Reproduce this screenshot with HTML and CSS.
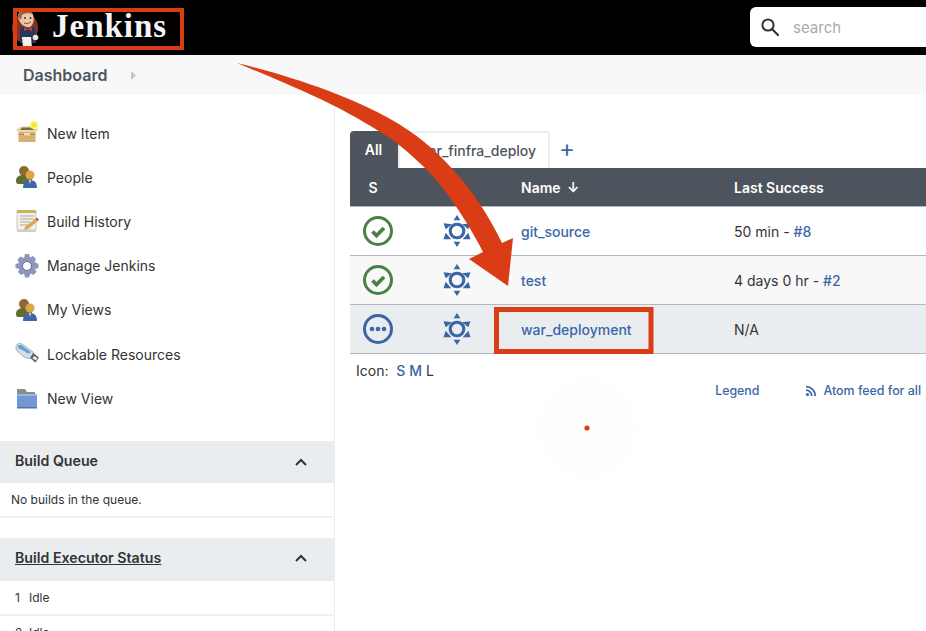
FILE: index.html
```html
<!DOCTYPE html>
<html lang="en">
<head>
<meta charset="utf-8">
<title>Dashboard [Jenkins]</title>
<link rel="stylesheet" href="styles.css">
</head>
<body>
<header class="topbar">
  <a class="logo">
    <svg class="butler" viewBox="0 0 30 42" width="30" height="42">
      <ellipse cx="13" cy="21" rx="13" ry="15" fill="#8e3020"/>
      <path d="M8 20h15l1 16H8z" fill="#26385f"/>
      <path d="M10 30h9l1 11H11z" fill="#f4f1ea"/>
      <circle cx="23.500" cy="30.500" r="2.800" fill="#f2e6d8"/>
      <path d="M12 20l4 2 4-2v4l-4-1.500-4 1.500z" fill="#d33833"/>
      <path d="M6 9c0-4 4-6 8-6s7 3 7.500 7c.5 3 0 5-1 7-1 3-4 4-6 3-3-1-6-3-7-6-1-2-1.500-3-1.500-5z" fill="#eec8a6"/>
      <path d="M6 10c0-5 4-8 8-8 3 0 6 2 7 5-4-1-8-1-11 1l-1 5z" fill="#8f6a48"/>
      <circle cx="13" cy="11" r=".9" fill="#222"/><circle cx="18.500" cy="11" r=".9" fill="#222"/>
      <path d="M12 16q3 2 7-1" stroke="#8a3a2a" stroke-width=".9" fill="none"/>
    </svg>
    <span class="logo-text">Jenkins</span>
  </a>
  <div class="search">
    <svg viewBox="0 0 20 20" width="20" height="20"><circle cx="8" cy="8" r="5.6" fill="none" stroke="#333" stroke-width="2"/><path d="M12.2 12.2L18 18" stroke="#333" stroke-width="2.2" stroke-linecap="round"/></svg>
    <span class="search-text">search</span>
  </div>
</header>

<nav class="crumbs">
  <span class="crumb">Dashboard</span>
  <svg class="crumb-arrow" viewBox="0 0 5 9" width="5" height="9"><path d="M0 0l5 4.500-5 4.500z" fill="#c4c7ca"/></svg>
</nav>

<div class="layout">
  <aside class="side">
    <ul class="tasks">
      <li class="task">
        <svg viewBox="0 0 24 24" width="24" height="24"><path d="M3.500 9h17v12h-17z" fill="#d9ae72"/><path d="M.500 8.500l6-3h11l6 3-3 2.500H3.500z" fill="#efd7ae"/><path d="M7 6.500h10l2 2.500H5z" fill="#7c6a4c"/><path d="M3.500 13h17v1h-17z" fill="#b98d52"/><path d="M9 12h6v2.500H9z" fill="#f0dcb8"/><circle cx="19" cy="4" r="4" fill="#fdf36b"/><circle cx="19" cy="4" r="2" fill="#f7e21c"/></svg>
        <span>New Item</span>
      </li>
      <li class="task">
        <svg viewBox="0 0 24 24" width="24" height="24"><circle cx="9" cy="6" r="5" fill="#8c6a32"/><path d="M1 16c0-5 4-6 8-6s8 1 8 6v3H3c-1 0-2-1-2-3z" fill="#5f6d2d"/><circle cx="15" cy="10" r="4.600" fill="#dca54a"/><path d="M8 23c0-6 3-8 7-8s7 2 7 8z" fill="#3f67a8"/><path d="M14 15h2l-1 4z" fill="#f3ead8"/></svg>
        <span>People</span>
      </li>
      <li class="task">
        <svg viewBox="0 0 24 24" width="24" height="24"><path d="M2 2h19v19H2z" fill="#f3f1e8" stroke="#bdbdb5" stroke-width=".8"/><path d="M2 1h19v3H2z" fill="#c9b25d"/><path d="M5 7h14M5 10h14M5 13h10M5 16h8" stroke="#a7a9a6" stroke-width="1"/><path d="M2 21h19v2H2z" fill="#cfcfca"/><path d="M10 18l10-8 3 2-10 8-4 1z" fill="#e0a548"/><path d="M20 10l2-1.500 2 2.500-1 1z" fill="#c6473a"/></svg>
        <span>Build History</span>
      </li>
      <li class="task">
        <svg viewBox="0 0 24 24" width="24" height="24"><path d="M10 0h4l1 3.500 3-1.500 3 3-1.500 3L23.500 10v4L20 15l1.500 3-3 3-3-1.500-1.500 4h-4l-1-4L6 21l-3-3 1.500-3L.500 14v-4L4 9 2.500 5.500l3-3L9 4z" fill="#8f96bd"/><circle cx="12" cy="12" r="4.500" fill="#fff"/><circle cx="12" cy="12" r="4.500" fill="none" stroke="#676d94"/></svg>
        <span>Manage Jenkins</span>
      </li>
      <li class="task">
        <svg viewBox="0 0 24 24" width="24" height="24"><circle cx="9" cy="6" r="5" fill="#8c6a32"/><path d="M1 16c0-5 4-6 8-6s8 1 8 6v3H3c-1 0-2-1-2-3z" fill="#5f6d2d"/><circle cx="15" cy="10" r="4.600" fill="#dca54a"/><path d="M8 23c0-6 3-8 7-8s7 2 7 8z" fill="#3f67a8"/><path d="M14 15h2l-1 4z" fill="#f3ead8"/></svg>
        <span>My Views</span>
      </li>
      <li class="task">
        <svg viewBox="0 0 24 24" width="24" height="24"><path d="M1 4c1-3 4-3 6-2l11 8c2 2 1 5-2 6-3 1-5 0-7-1L2 9C1 8 1 6 1 4z" fill="#d8dde2" stroke="#8d9399" stroke-width=".7"/><path d="M3 3.500c1-1 3-1 4 0l8 6c1 1 0 2-1 2-2 0-3-1-4-2L3 6z" fill="#5ea3e4"/><path d="M15 16l3-5 6 4.500-3.500 5z" fill="#5c6064"/><path d="M19 14l3.500 2-1.500 2.500-3.500-2z" fill="#e6e6e6"/></svg>
        <span>Lockable Resources</span>
      </li>
      <li class="task">
        <svg viewBox="0 0 24 24" width="24" height="24"><path d="M2 3h8l2 3h8v4H2z" fill="#8b8e90"/><path d="M2 8h20v14H2z" fill="#7198d2"/><path d="M2 8h20v2H2z" fill="#97b7e2"/><path d="M2 21h20v1.500H2z" fill="#4f74ab"/></svg>
        <span>New View</span>
      </li>
    </ul>

    <section class="pane">
      <h2 class="pane-head"><span>Build Queue</span><svg class="chev-queue" viewBox="0 0 12 8" width="12" height="8"><path d="M1 7l5-5 5 5" fill="none" stroke="#333" stroke-width="2"/></svg></h2>
      <div class="pane-row pane-row-queue">No builds in the queue.</div>
    </section>

    <section class="pane">
      <h2 class="pane-head pane-head-exec"><a>Build Executor Status</a><svg viewBox="0 0 12 8" width="12" height="8"><path d="M1 7l5-5 5 5" fill="none" stroke="#333" stroke-width="2"/></svg></h2>
      <div class="pane-row pane-row-exec"><span class="num">1</span>Idle</div>
      <div class="pane-row pane-row-exec"><span class="num">2</span>Idle</div>
    </section>
  </aside>

  <main class="main">
    <div class="tabs">
      <span class="tab tab-active">All</span>
      <span class="tab tab-plain">war_finfra_deploy</span>
      <span class="tab-add">+</span>
    </div>
    <table class="jobs">
      <colgroup><col class="c-s"><col class="c-w"><col class="c-n"><col></colgroup>
      <thead>
        <tr><th class="ctr th-s">S</th><th class="ctr">W</th><th>Name <span class="sort">↓</span></th><th>Last Success</th></tr>
      </thead>
      <tbody>
        <tr>
          <td class="ctr"><svg class="ball" viewBox="0 0 32 32" width="32" height="32"><circle cx="16" cy="16" r="13.500" fill="none" stroke="#4a8047" stroke-width="3"/><path d="M10.500 16.500l4 4 7.500-7.500" fill="none" stroke="#4a8047" stroke-width="3.800"/></svg></td>
          <td class="ctr"><svg class="sun" viewBox="0 0 30 32" width="30" height="32"><use href="#sun"/></svg></td>
          <td><a class="job">git_source</a></td>
          <td>50 min - <a class="job">#8</a></td>
        </tr>
        <tr class="alt">
          <td class="ctr"><svg class="ball" viewBox="0 0 32 32" width="32" height="32"><circle cx="16" cy="16" r="13.500" fill="none" stroke="#4a8047" stroke-width="3"/><path d="M10.500 16.500l4 4 7.500-7.500" fill="none" stroke="#4a8047" stroke-width="3.800"/></svg></td>
          <td class="ctr"><svg class="sun" viewBox="0 0 30 32" width="30" height="32"><use href="#sun"/></svg></td>
          <td><a class="job">test</a></td>
          <td>4 days 0 hr - <a class="job">#2</a></td>
        </tr>
        <tr class="sel">
          <td class="ctr"><svg class="ball" viewBox="0 0 32 32" width="32" height="32"><circle cx="16" cy="16" r="13.500" fill="none" stroke="#3a66a5" stroke-width="3"/><circle cx="10" cy="16" r="2.300" fill="#3a66a5"/><circle cx="16" cy="16" r="2.300" fill="#3a66a5"/><circle cx="22" cy="16" r="2.300" fill="#3a66a5"/></svg></td>
          <td class="ctr"><svg class="sun" viewBox="0 0 30 32" width="30" height="32"><use href="#sun"/></svg></td>
          <td><a class="job">war_deployment</a></td>
          <td>N/A</td>
        </tr>
      </tbody>
    </table>
    <div class="icon-size">Icon:&nbsp; <a class="job-size">S</a> <a class="job-size">M</a> L</div>
    <div class="foot-links">
      <a class="foot-link">Legend</a>
      <a class="foot-link foot-atom"><svg viewBox="0 0 12 12" width="12" height="12"><circle cx="2.500" cy="9.500" r="1.600" fill="#3a66a5"/><path d="M1 5.200a5.800 5.800 0 0 1 5.800 5.800M1 1.700a9.300 9.300 0 0 1 9.300 9.300" fill="none" stroke="#3a66a5" stroke-width="1.800"/></svg>Atom feed for all</a>
    </div>
  </main>
</div>

<svg class="defs" width="0" height="0">
  <symbol id="sun" viewBox="0 0 30 32">
    <circle cx="15" cy="16" r="6.800" fill="none" stroke="#3a66a5" stroke-width="3.100"/>
    <path d="M15 0l3.400 5.300h-6.800zM15 32l3.400-5.300h-6.800zM1.500 8.300l8.500 1-6.300 5zM28.500 8.300l-8.500 1 6.300 5zM1.500 24.300h7.800l-5.600-6.600zM28.500 24.300h-7.800l5.600-6.600z" fill="#3a66a5"/>
  </symbol>
</svg>

<svg class="annot" viewBox="0 0 926 631" width="926" height="631">
  <rect x="15" y="10" width="167" height="38" fill="none" stroke="#da3d15" stroke-width="4"/>
  <circle cx="587" cy="428" r="50" fill="#fefefe"/>
  <circle cx="587" cy="428" r="2.600" fill="#da3d15"/>
  <path d="M237 63C290 76 350 96 392 120C435 144 476 188 502 243L513 238L508 286L469 259L483 252C468 222 444 186 423 166C407 151 396 142 388 137C340 105 290 85 237 63Z" fill="#da3d15"/>
  <rect x="496.500" y="309.500" width="154.500" height="42" fill="none" stroke="#da3d15" stroke-width="5"/>
</svg>
</body>
</html>
```

FILE: styles.css
```css
* { box-sizing: border-box; }
html, body { margin: 0; height: 100%; }
body {
  position: relative;
  height: 631px;
  overflow: hidden;
  background: #fff;
  color: #333;
  font-family: Inter, "Liberation Sans", sans-serif;
  font-size: 14px;
}
a { color: inherit; }

.topbar {
  height: 55px;
  background: #000;
  display: flex;
  justify-content: space-between;
  align-items: center;
}
.logo { display: flex; align-items: center; padding-left: 12px; height: 55px; }
.butler { flex: none; }
.logo-text {
  margin-left: 10px;
  color: #f5f5f5;
  font-family: "Liberation Serif", serif;
  font-weight: 700;
  font-size: 33px;
  letter-spacing: 1px;
  line-height: 40px;
  padding-bottom: 4px;
}
.search {
  width: 176px;
  height: 40px;
  margin-bottom: 1px;
  background: #fff;
  border-radius: 6px 0 0 6px;
  display: flex;
  align-items: center;
  padding-left: 10px;
  gap: 13px;
}
.search-text { color: #aaa; font-size: 15px; }

.crumbs {
  height: 40px;
  background: #f8f8f8;
  display: flex;
  align-items: center;
  padding-left: 23px;
}
.crumb { font-size: 16px; font-weight: 600; color: #4d545d; }
.crumb-arrow { margin-left: 24px; }

.layout { display: flex; align-items: stretch; height: 536px; }

.side {
  width: 335px;
  flex: none;
  border-right: 1px solid #e9edf0;
  padding-top: 16px;
}
.tasks { list-style: none; margin: 0 0 21px; padding: 0; }
.task {
  height: 44.2px;
  display: flex;
  align-items: center;
  gap: 8px;
  padding-left: 15px;
  color: #333;
}
.pane { margin-bottom: 20px; }
.pane-head {
  margin: 0;
  height: 42px;
  padding: 0 27px 4px 15px;
  background: #e9edf0;
  display: flex;
  align-items: center;
  justify-content: space-between;
  font-size: 14.2px;
  font-weight: 600;
  color: #333;
}
.chev-queue { margin-top: 4px; }
.pane-head-exec { height: 43px; }
.pane-head-exec a { text-decoration: underline; }
.pane-row {
  border-bottom: 2px solid #f0f2f4;
  font-size: 12px;
}
.pane-row-queue { height: 35px; padding: 9px 11px 0; }
.pane-row-exec { height: 35px; padding: 9px 15px 0; }
.num { display: inline-block; width: 14px; }

.main { flex: 1; min-width: 0; padding: 36px 0 0 15px; overflow: hidden; }
.tabs { display: flex; align-items: flex-end; height: 37px; }
.tab { height: 37px; display: flex; align-items: center; justify-content: center; }
.tab-active {
  width: 48px;
  background: #4d545d;
  color: #fff;
  font-weight: 600;
  border-radius: 4px 0 0 0;
  padding-right: 1px;
}
.tab-plain {
  width: 152px;
  padding-left: 5px;
  border: 2px solid #e9edf0;
  border-bottom: 0;
  border-radius: 0 4px 0 0;
  color: #4d545d;
  font-weight: 500;
}
.tab-add {
  margin-left: 9px;
  color: #3a66a5;
  font-size: 24px;
  line-height: 32px;
  width: 16px;
  height: 35px;
  text-align: center;
}

.jobs {
  width: 576px;
  table-layout: fixed;
  border-collapse: separate;
  border-spacing: 0;
  color: #333;
}
.c-s { width: 56px; }
.c-w { width: 102px; }
.c-n { width: 213px; }
.jobs th {
  height: 39px;
  background: #4d545d;
  color: #fff;
  font-weight: 600;
  text-align: left;
  padding: 0 0 0 13px;
  border-bottom: 1px solid #b1b8c0;
}
.jobs th.ctr, .jobs td.ctr { text-align: center; padding: 0; }
.jobs th.th-s { padding-right: 10px; }
.sort { margin-left: 3px; }
.jobs td {
  height: 49px;
  padding: 0 0 0 13px;
  border-bottom: 1px solid #b1b8c0;
  vertical-align: middle;
}
.jobs svg { display: block; margin: 0 auto; }
.alt td { background: #f8f8f8; }
.sel td { background: #e9edf0; }
.job { color: #3a66a5; font-weight: 500; }

.icon-size { padding: 8px 0 0 6px; line-height: 17px; color: #333; }
.job-size { color: #3a66a5; font-weight: 500; }
.foot-links {
  display: flex;
  justify-content: flex-end;
  gap: 46px;
  padding: 3px 5px 0 0;
  line-height: 17px;
}
.foot-link { color: #3a66a5; font-size: 12.4px; font-weight: 500; }
.foot-atom { display: flex; align-items: center; gap: 6px; }

.defs { position: absolute; }
.annot { position: absolute; left: 0; top: 0; pointer-events: none; }
```
